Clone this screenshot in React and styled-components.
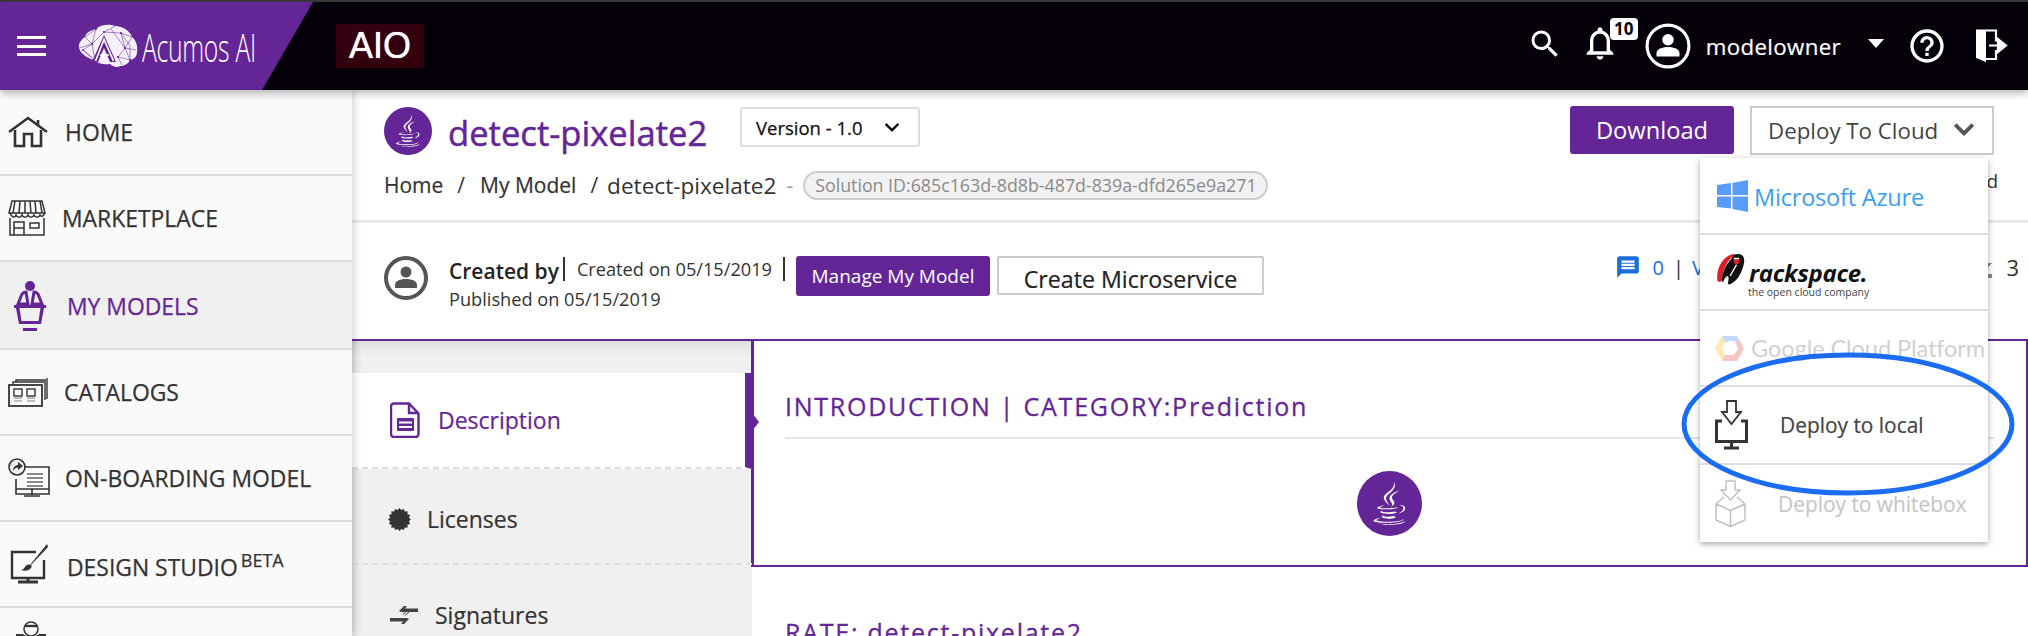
import React from 'react';
import styled, { createGlobalStyle } from 'styled-components';
import { FaJava } from 'react-icons/fa';
import { MdSearch, MdNotificationsNone, MdHelpOutline, MdMessage } from 'react-icons/md';

const purple = '#642697';

const Global = createGlobalStyle`
  html, body { margin: 0; padding: 0; background: #fff; }
  body { font-family: "Open Sans", sans-serif; color: #333; overflow: hidden; }
  * { box-sizing: border-box; }
`;

const Page = styled.div`
  position: relative; width: 2028px; height: 636px; overflow: hidden; display: flex; flex-direction: column;
`;
const TopStrip = styled.div`height: 2px; background: #3a3a3a; flex: none;`;
const Header = styled.header`
  flex: none; height: 88px; background: #05000a; display: flex; align-items: center; position: relative; z-index: 3;
  box-shadow: 0 3px 8px rgba(0,0,0,.3);
`;
const Brand = styled.div`
  width: 313px; height: 100%; background: ${purple}; clip-path: polygon(0 0, 100% 0, 262px 100%, 0 100%);
  display: flex; align-items: center; padding-left: 17px; flex: none;
`;
const Burger = styled.div`
  width: 29px; height: 20px; flex: none; margin-right: 32px;
  border-top: 3px solid #fff; border-bottom: 3px solid #fff; position: relative;
  &::after { content: ""; position: absolute; left: 0; right: 0; top: 5.5px; height: 3px; background: #fff; }
`;
const LogoText = styled.span`
  color: #fff; font-size: 39px; font-weight: 300; margin-left: 4px; display: inline-block; white-space: nowrap;
  transform: scaleX(.635); transform-origin: left center; width: 112px; letter-spacing: -.5px;
`;
const AioBox = styled.div`
  margin-left: 23px; width: 88px; height: 44px; background: #33000f; color: #fff; font-family: "Liberation Sans", sans-serif;
  font-size: 36px; line-height: 43px; text-align: center; text-shadow: 0 0 1px #fff;
`;
const HeaderRight = styled.div`margin-left: auto; display: flex; align-items: center; height: 100%; color: #fff; padding-right: 20px;`;
const Bell = styled.div`position: relative; margin-left: 20px; width: 36px; height: 36px; margin-top: -4px;`;
const Badge = styled.span`
  position: absolute; left: 27px; top: -8px; width: 28px; height: 22px; background: #fff; color: #05000a; border-radius: 4px;
  font-size: 17px; font-weight: 700; text-align: center; line-height: 22px;
`;
const UserName = styled.span`font-size: 22.3px; margin-left: 15px; letter-spacing: .35px; -webkit-text-stroke: .2px #fff;`;
const Caret = styled.span`
  width: 0; height: 0; border-left: 8px solid transparent; border-right: 8px solid transparent; border-top: 9px solid #fff;
  margin: 0 23px 6px 27px;
`;

const Body = styled.div`flex: 1; display: flex; min-height: 0;`;
const Sidebar = styled.nav`
  width: 352px; flex: none; background: #fafafa; position: relative; z-index: 2; box-shadow: 2px 0 8px rgba(0,0,0,.18);
`;
const NavRow = styled.div`
  height: ${p => p.$h || 86}px; display: flex; align-items: center; padding-left: 8px; border-bottom: 2px solid #dcdcdc;
  background: ${p => (p.$active ? '#f0f0f0' : '#fafafa')}; color: ${p => (p.$active ? purple : '#333')};
  font-size: 22.9px; white-space: nowrap; -webkit-text-stroke: .25px currentColor;
`;
const NavIcon = styled.span`
  width: ${p => p.$w}px; flex: none; display: flex; align-items: center; justify-content: flex-start; margin-top: ${p => p.$top || 0}px;
`;
const NavLabel = styled.span`margin-top: ${p => p.$top || 0}px;`;
const Sup = styled.sup`font-size: 18px; line-height: 0; vertical-align: 9px; margin-left: 3px;`;
const LastRow = styled(NavRow)`align-items: flex-start; padding: 13px 0 0 15px;`;

const Main = styled.main`flex: 1; min-width: 0; display: flex; flex-direction: column;`;
const TitleSection = styled.section`
  flex: none; height: 133px; border-bottom: 3px solid #e8e8e8; padding: 17px 34px 0 32px; display: flex; flex-direction: column;
`;
const TitleRow = styled.div`display: flex; align-items: flex-start;`;
const JavaCircle = styled.span`
  width: ${p => p.$size}px; height: ${p => p.$size}px; border-radius: 50%; background: ${purple}; color: #fff; flex: none;
  display: flex; align-items: center; justify-content: center; font-size: ${p => p.$size * .66}px;
`;
const Title = styled.h1`
  margin: 3px 0 0 16px; width: 275px; color: ${purple}; font-size: 34.6px; line-height: 46px; font-weight: 400; white-space: nowrap;
  -webkit-text-stroke: .5px ${purple};
`;
const VersionSelect = styled.div`
  margin-left: 17px; width: 180px; height: 40px; border: 2px solid #ddd; border-radius: 3px; display: flex; align-items: center;
  padding-left: 14px; font-size: 18.5px; color: #111; gap: 21px; -webkit-text-stroke: .25px #111;
`;
const PrimaryButton = styled.button`
  border: 0; border-radius: 3px; background: ${purple}; color: #fff; font-family: inherit; padding: 0; white-space: nowrap;
  width: ${p => p.$w}px; height: ${p => p.$h}px; font-size: ${p => p.$fs}px; font-weight: 400; flex: none;
`;
const TitleActions = styled.div`margin-left: auto; display: flex; gap: 16px; margin-top: -1px;`;
const DeploySelect = styled.div`
  width: 244px; height: 49px; border: 2px solid #ccc; display: flex; align-items: center; padding-left: 16px; color: #444; font-size: 22.3px;
  justify-content: space-between; padding-right: 17px;
`;
const ChevronUp = styled.span`display: flex; margin-top: -4px;`;
const Crumbs = styled.div`display: flex; align-items: center; font-size: 21px; margin-top: 13px; height: 32px; color: #333; white-space: nowrap;`;
const CrumbLink = styled.span`-webkit-text-stroke: .2px #333;`;
const CrumbSep = styled.span`margin: 0 ${p => p.$r || 15}px 0 ${p => p.$l || 14}px;`;
const CrumbLast = styled.span`font-size: 22.6px;`;
const CrumbDash = styled(CrumbSep)`color: #999;`;
const Pill = styled.span`
  margin-left: 9px; height: 29px; width: 465px; border: 2px solid #ccc; border-radius: 15px; background: #f2f2f2; color: #8a8a8a; font-size: 17.8px;
  line-height: 25px; padding-left: 10px; overflow: hidden; flex: none;
`;
const EndText = styled.span`margin-left: auto; font-size: 19px; margin-right: -4px; margin-top: -8px;`;

const CreatedRow = styled.section`flex: none; height: 116px; padding: 33px 0 0 32px; display: flex; align-items: flex-start;`;
const CreatedText = styled.div`margin-left: 21px; width: 347px; font-size: 18.2px; line-height: 27px; color: #333; flex: none; margin-top: 1px;`;
const CreatedBy = styled.b`font-weight: 600; color: #222; font-size: 21px;`;
const CreatedOn = styled.span`position: relative; top: -3px;`;
const Bar = styled.span`display: inline-block; width: 2px; height: 24px; background: #333; vertical-align: -2px; margin: 0 ${p => p.$r || 10}px 0 ${p => p.$l || 0}px;`;
const GhostButton = styled.button`
  margin-left: 7px; width: 267px; height: 39px; background: #fff; border: 2px solid #ccc; border-radius: 2px; font-family: inherit;
  font-size: 23.2px; color: #222; padding: 5px 0 0; white-space: nowrap; flex: none; -webkit-text-stroke: .2px #222;
`;
const Stats = styled.div`margin-left: auto; display: flex; align-items: center; font-size: 20px; color: #333; height: 40px; margin-top: -9px; padding-right: 9px;`;
const BlueNum = styled.span`color: #1a6fd8; margin: 0 9px 0 12px;`;
const BlueText = styled.span`color: #1a6fd8; margin-left: 8px; width: 56px;`;
const StatsFill = styled.span`width: 271px; display: flex; align-items: center; justify-content: flex-end; gap: 14px; font-size: 22px;`;

const Detail = styled.section`flex: 1; min-height: 0; display: grid; grid-template-columns: 400px 1fr; border-top: 2px solid ${purple};`;
const Tabs = styled.div`
  background: #f0f0f0; padding-top: 32px; box-shadow: inset 0 14px 14px -10px rgba(0,0,0,.1), inset 8px 0 8px -6px rgba(0,0,0,.08);
`;
const Tab = styled.div`
  height: ${p => p.$h}px; display: flex; align-items: center; padding: ${p => p.$pt || 0}px 0 0 ${p => p.$pl || 38}px; font-size: 23px; position: relative;
  border-bottom: 2px dashed #ddd; background: ${p => (p.$active ? '#fff' : 'transparent')}; color: ${p => (p.$active ? purple : '#333')};
  gap: ${p => p.$gap || 18}px; -webkit-text-stroke: .2px currentColor;
  ${p => p.$active && `
    border-right: 7px solid ${purple};
    &::after { content: ""; position: absolute; right: -14px; top: 40px; border-left: 7px solid ${purple}; border-top: 9px solid transparent; border-bottom: 9px solid transparent; }
  `}
`;
const Right = styled.div`display: flex; flex-direction: column; min-width: 0;`;
const Panel = styled.div`
  height: 226px; border-left: 2px solid ${purple}; border-right: 2px solid ${purple}; border-bottom: 2px solid ${purple}; padding: 49px 32px 0 31px;
  box-shadow: -1px 0 0 ${purple};
`;
const SectionTitle = styled.h2`
  margin: 0; font-size: 25px; font-weight: 400; color: ${purple}; letter-spacing: 1.75px; white-space: nowrap; line-height: 32px;
  -webkit-text-stroke: .3px ${purple};
`;
const SectionRule = styled.div`height: 2px; background: #e4e4e4; margin-top: 15px;`;
const CenterRow = styled.div`display: flex; justify-content: center; padding-top: 32px;`;
const RateBlock = styled.div`padding: 49px 0 0 33px;`;

const Dropdown = styled.div`
  position: absolute; left: 1700px; top: 158px; width: 288px; height: 384px; background: #fff; z-index: 4;
  box-shadow: 0 2px 6px rgba(0,0,0,.35); display: flex; flex-direction: column;
`;
const DropItem = styled.div`
  height: ${p => p.$h}px; flex: none; display: flex; align-items: center; padding-left: ${p => p.$pl || 15}px; border-bottom: ${p => (p.$last ? 0 : 2)}px solid ${p => p.$line || '#ddd'};
  ${p => p.$dim && 'opacity: .3;'} position: relative;
`;
const AzureText = styled.span`color: #3a9ff0; font-size: 23.5px; margin-left: 6px; white-space: nowrap; letter-spacing: -.2px; margin-top: 2px;`;
const RackWrap = styled.div`display: flex; flex-direction: column; margin-left: 3px; line-height: 1; margin-top: 14px;`;
const RackName = styled.span`font-style: italic; font-weight: 700; font-size: 24px; color: #111; letter-spacing: -.3px;`;
const RackSub = styled.span`font-size: 10.5px; color: #444; margin-left: -1px; margin-top: 2px; white-space: nowrap;`;
const GoogleText = styled.span`color: #666; margin-left: 7px; white-space: nowrap; letter-spacing: -.1px; font-family: "Lato", sans-serif; font-size: 23.6px;`;
const LocalText = styled.span`font-size: 20.9px; color: #444; margin-left: 32px; white-space: nowrap; -webkit-text-stroke: .2px #444;`;
const Ellipse = styled.svg`position: absolute; left: 1680px; top: 350px; z-index: 5; pointer-events: none;`;
const Spacer = styled.span`width: ${p => p.$w}px; flex: none;`;
const Shifted = styled.span`display: flex; margin-left: ${p => p.$l || 0}px;`;

const Avatar = ({ size, color, sw = 3 }) => (
  <svg width={size} height={size} viewBox="0 0 44 44" style={{ flex: 'none' }}>
    <circle cx="22" cy="22" r="20" fill="none" stroke={color} strokeWidth={sw} />
    <circle cx="22" cy="16" r="5.5" fill={color} />
    <path d="M11 32v-3c0-4 5-6 11-6s11 2 11 6v3z" fill={color} />
  </svg>
);

const BrainLogo = () => (
  <svg width="60" height="44" viewBox="0 0 60 44" style={{ flex: 'none' }}>
    <path d="M1 24C0 19 4 15 7 13 8 8 14 6 18 5 23 0 32 0 37 2 45 2 52 7 54 13 58 16 60 22 59 28 59 32 57 35 52 36 50 40 46 42 42 42 40 44 35 43 32 40 27 41 20 40 17 36 11 35 3 31 1 24Z" fill="#f6f0fa" />
    <g fill="none" stroke={purple} strokeWidth=".55">
      <path d="M7 13 14 20 5 26 13 33M18 5 14 20 26 8 37 2M26 8 43 9 54 13 47 24 58 26M43 9 47 24 52 36M47 24 40 33 44 41M14 20 17 36M7 13 18 5M1 24 14 20M33 5 47 24M43 9 52 22 52 36M40 33 52 36M5 26 17 36" />
    </g>
    <g fill={purple}><circle cx="14" cy="20" r="1.1"/><circle cx="26" cy="8" r="1.1"/><circle cx="47" cy="24" r="1.1"/><circle cx="43" cy="9" r="1.1"/><circle cx="40" cy="33" r="1.1"/><circle cx="5" cy="26" r="1"/><circle cx="52" cy="36" r="1"/><circle cx="18" cy="5" r="1"/></g>
    <path d="M14 38 26 11 38 38H32L26 24 20 38Z" fill={purple} />
    <path d="M17.500 37 26 15.500 35.500 37M22 31H31" fill="none" stroke="#fff" strokeWidth="1.7" />
  </svg>
);

const Exit = () => (
  <svg width="33" height="34" viewBox="0 0 33 34">
    <path d="M1 2h10v31L1 29z" fill="#fff" />
    <path d="M1 1.500h20v11M21 21v9h-10" fill="none" stroke="#fff" strokeWidth="2.2" />
    <path d="M14 16.500h13M23 10l8 6.500-8 6.500z" fill="#fff" stroke="#fff" strokeWidth="2.2" />
  </svg>
);

const ic = { fill: 'none', stroke: '#333', strokeWidth: 1.8 };
const HomeIcon = () => (
  <svg width="40" height="32" viewBox="0 0 40 32"><g {...ic} strokeWidth="2.6">
    <path d="M1 16 20 2l19 14" /><path d="M7 14v16h9V18h8v12h9V14" /><path d="M30 4v6" /></g></svg>
);
const StoreIcon = () => (
  <svg width="38" height="36" viewBox="0 0 38 36"><g {...ic} strokeWidth="1.5">
    <path d="M4 1h30l3 12H1zM2 13c2 5 5 5 6 2 1 3 5 3 6 0 1 3 5 3 6 0 1 3 5 3 6 0 1 3 5 3 6 0 2 3 4 0 5-2M7 1 5 13M12 1l-1 12M17 1v12M22 1l1 12M27 1l1 12M32 1l2 12" />
    <path d="M2 18v17h34V18M6 35V22h10v13M6 28h10M22 23h9v5h-9z" /></g></svg>
);
const PodiumIcon = () => (
  <svg width="32" height="50" viewBox="0 0 32 50" fill={purple}>
    <circle cx="16" cy="5" r="5" />
    <path d="M4 23 8 13c1-1 3-2 4-2l2 12zM28 23l-4-10c-1-1-3-2-4-2l-2 12z" fill="none" stroke={purple} strokeWidth="3" />
    <path d="M0 24h32v3h-2l-3 16H5L2 27H0zM5.500 27l2 13h17l2-13z" fillRule="evenodd" />
    <rect x="9" y="47" width="14" height="3" />
  </svg>
);
const CatalogIcon = () => (
  <svg width="40" height="30" viewBox="0 0 40 30"><g {...ic} strokeWidth="1.4">
    <path d="M8 5V3h29v20M5 8V5h31" /><path d="M39 1v21" />
    <rect x="1" y="8" width="33" height="21" strokeWidth="1.8" />
    <rect x="6" y="12" width="8" height="7" /><rect x="19" y="12" width="8" height="7" />
    <path d="M6 21h8M6 24h8M19 21h8M19 24h8" stroke="#aaa" strokeWidth="1.6" /></g></svg>
);
const OnboardIcon = () => (
  <svg width="42" height="40" viewBox="0 0 42 40"><g {...ic} strokeWidth="1.6">
    <path d="M17 9h24v27H8V21" /><path d="M8 31h33M24 31v6M16 38h16" />
    <path d="M19 16h16M19 20h16M19 24h16M19 28h16" stroke="#666" />
    <circle cx="9" cy="9" r="8" fill="#eee" /></g>
    <path d="M5 13c0-4 3-6 5-6V4l5 4-5 4V9.500c-2 0-4 1.500-5 3.500z" fill="#333" /></svg>
);
const StudioIcon = () => (
  <svg width="38" height="40" viewBox="0 0 38 40"><g {...ic} strokeWidth="2.4">
    <path d="M26 8H2v26h32V16" /><path d="M18 34v4M8 38h20" strokeWidth="3" /></g>
    <path d="M37 0 20 21c-2-1-4 0-5 2-1 2-3 3-4 3 3 1 7 1 9-1 2-2 2-3 1-4L38 3z" fill="#333" /></svg>
);
const GovernIcon = () => (
  <svg width="32" height="26" viewBox="0 0 32 26"><g {...ic} strokeWidth="1.5">
    <circle cx="16" cy="8" r="7" fill="#fafafa" /><path d="M10 5h12" strokeWidth="2.4" /></g>
    <path d="M1 13h7c2 3 14 3 16 0h7v13H1z" fill="#333" /></svg>
);
const DocIcon = () => (
  <svg width="30" height="36" viewBox="0 0 30 36"><g fill="none" stroke={purple} strokeWidth="2.4">
    <path d="M4 1.500h15l9.500 10V32a3 3 0 0 1-3 3H4a3 3 0 0 1-3-3V4.500a3 3 0 0 1 3-3z" /><path d="M19 2v9h9" /></g>
    <rect x="7" y="16" width="17" height="13" rx="1" fill={purple} /><path d="M9 20.500h13M9 25h13" stroke="#fff" strokeWidth="1.8" /></svg>
);
const burst = (() => {
  const pts = []; const n = 16;
  for (let i = 0; i < n * 2; i++) {
    const r = i % 2 ? 9.6 : 11.5; const a = (Math.PI * i) / n;
    pts.push(`${(11.5 + r * Math.cos(a)).toFixed(2)},${(11.5 + r * Math.sin(a)).toFixed(2)}`);
  }
  return pts.join(' ');
})();
const BurstIcon = () => <svg width="23" height="23" viewBox="0 0 23 23" style={{ flex: 'none' }}><polygon points={burst} fill="#333" /></svg>;
const SwapIcon = () => (
  <svg width="28" height="18" viewBox="0 0 28 18" style={{ flex: 'none' }} fill="#444">
    <path d="M11 6h17V2.500H15L17 0h-3L9 5zM17 12H0v3.500h13L11 18h3l5-5z" />
    <path d="M13 8.500 17 5M15 9.500 19 6" stroke="#444" strokeWidth="1" />
  </svg>
);
const Chevron = ({ w, h, sw, color }) => (
  <svg width={w} height={h} viewBox="0 0 20 12"><path d="M2 2l8 8 8-8" fill="none" stroke={color} strokeWidth={sw} /></svg>
);
const TrayArrow = () => (
  <svg width="14" height="22" viewBox="0 0 14 22" fill="#888" style={{ flex: 'none' }}>
    <path d="M4 0h6v7h4l-7 8-7-8h4zM0 18h14v4H0z" />
  </svg>
);
const Windows = () => (
  <svg width="31" height="32" viewBox="0 0 31 32" style={{ flex: 'none' }} fill="#5a9cf6">
    <path d="M0 5 14 3v12H0zM15.500 3 31 0v15H15.500zM0 16.500h14v12L0 27zM15.500 16.500H31V32l-15.500-3z" />
  </svg>
);
const RackMark = () => (
  <svg width="30" height="33" viewBox="0 0 32 36" style={{ flex: 'none', marginTop: -5 }}>
    <path d="M18 1C8 4 0 14 1 30c1 2 4 2 5 0 1-13 6-22 14-28z" fill="#d8202a" />
    <path d="M19 2c8-3 13 1 11 10-2 9-7 19-15 22-2 1-3-1-2-3 1-5 0-9-4-3-1 3-2 4-3 3 0-8 3-14 5-18 4-4 6-8 8-11z" fill="#111" />
    <path d="M19 6h6v5l-3 2-3-2z" fill="#d8202a" />
    <path d="M19 6h6M22 13l-7 12" stroke="#fff" strokeWidth="1.400" fill="none" />
  </svg>
);
const GoogleHex = () => (
  <svg width="29" height="27" viewBox="0 0 29 27" style={{ flex: 'none' }}>
    <path d="M7 1h15l3 5H15L9 8z" fill="#4285f4" /><path d="M0 13.500 7 1l3 7-3 6 3 5-3 7z" fill="#fbbc05" />
    <path d="M29 13.500 22 26H7l3-6h9l4-6-3-8h5z" fill="#ea4335" />
  </svg>
);
const LocalIcon = () => (
  <svg width="33" height="50" viewBox="0 0 33 50" style={{ flex: 'none' }} fill="none" stroke="#333">
    <path d="M12 1h9v11h5L16.500 24 7 12h5z" strokeWidth="1.8" />
    <path d="M7 21H1.500v20.500h30V21H26" strokeWidth="3" />
    <path d="M16.500 42v5M9 48h15" strokeWidth="3" />
  </svg>
);
const BoxIcon = () => (
  <svg width="31" height="47" viewBox="0 0 31 47" style={{ flex: 'none' }} fill="none" stroke="#333" strokeWidth="1.5">
    <path d="M11 1h9v9h5l-9.500 10L6 10h5z" />
    <path d="M9 17 1 24v16l14.500 6.500L30 40V24l-8-7M1 24l14.500 6.500L30 24M15.500 30.500v16" />
  </svg>
);

export default function App() {
  return (
    <Page>
      <Global />
      <TopStrip />
      <Header>
        <Brand>
          <Burger />
          <BrainLogo />
          <LogoText>Acumos AI</LogoText>
        </Brand>
        <AioBox>AIO</AioBox>
        <HeaderRight>
          <MdSearch size={36} style={{ marginTop: -4 }} />
          <Bell>
            <MdNotificationsNone size={40} style={{ margin: '-3px 0 0 -3px' }} />
            <Badge>10</Badge>
          </Bell>
          <Spacer $w={26} />
          <Avatar size={46} color="#fff" />
          <UserName>modelowner</UserName>
          <Caret />
          <MdHelpOutline size={40} />
          <Spacer $w={28} />
          <Exit />
        </HeaderRight>
      </Header>
      <Body>
        <Sidebar>
          <NavRow><NavIcon $w={57}><HomeIcon /></NavIcon><NavLabel $top={1}>HOME</NavLabel></NavRow>
          <NavRow><NavIcon $w={54}><StoreIcon /></NavIcon><NavLabel>MARKETPLACE</NavLabel></NavRow>
          <NavRow $active $h={88}><NavIcon $w={59} $top={2}><Shifted $l={6}><PodiumIcon /></Shifted></NavIcon><NavLabel $top={2}>MY MODELS</NavLabel></NavRow>
          <NavRow><NavIcon $w={56}><CatalogIcon /></NavIcon><NavLabel>CATALOGS</NavLabel></NavRow>
          <NavRow><NavIcon $w={57}><OnboardIcon /></NavIcon><NavLabel>ON-BOARDING MODEL</NavLabel></NavRow>
          <NavRow><NavIcon $w={59}><Shifted $l={2}><StudioIcon /></Shifted></NavIcon><NavLabel $top={6}>DESIGN STUDIO<Sup>BETA</Sup></NavLabel></NavRow>
          <LastRow><GovernIcon /></LastRow>
        </Sidebar>
        <Main>
          <TitleSection>
            <TitleRow>
              <JavaCircle $size={48}><FaJava /></JavaCircle>
              <Title>detect-pixelate2</Title>
              <VersionSelect>Version - 1.0 <Chevron w={16} h={10} sw={3} color="#111" /></VersionSelect>
              <TitleActions>
                <PrimaryButton $w={164} $h={48} $fs={23.7}>Download</PrimaryButton>
                <DeploySelect>Deploy To Cloud <ChevronUp><Chevron w={22} h={14} sw={3.4} color="#555" /></ChevronUp></DeploySelect>
              </TitleActions>
            </TitleRow>
            <Crumbs>
              <CrumbLink>Home</CrumbLink><CrumbSep>/</CrumbSep>
              <CrumbLink>My Model</CrumbLink><CrumbSep $r={9}>/</CrumbSep>
              <CrumbLast>detect-pixelate2</CrumbLast>
              <CrumbDash $l={10} $r={1}>-</CrumbDash>
              <Pill>Solution ID:685c163d-8d8b-487d-839a-dfd265e9a271</Pill>
              <EndText>d</EndText>
            </Crumbs>
          </TitleSection>
          <CreatedRow>
            <Avatar size={44} color="#555" sw={4} />
            <CreatedText>
              <CreatedBy>Created by</CreatedBy><Bar $l={4} $r={12} /><CreatedOn>Created on 05/15/2019</CreatedOn> <Bar $l={6} /><br />
              Published on 05/15/2019
            </CreatedText>
            <PrimaryButton $w={194} $h={40} $fs={19}>Manage My Model</PrimaryButton>
            <GhostButton>Create Microservice</GhostButton>
            <Stats>
              <MdMessage size={26} color="#1a6fd8" />
              <BlueNum>0</BlueNum>|
              <BlueText>V</BlueText>
              <StatsFill><TrayArrow />3</StatsFill>
            </Stats>
          </CreatedRow>
          <Detail>
            <Tabs>
              <Tab $active $h={96}><DocIcon />Description</Tab>
              <Tab $h={96} $gap={16} $pl={36} $pt={6}><BurstIcon />Licenses</Tab>
              <Tab $h={96} $gap={17} $pt={6}><SwapIcon />Signatures</Tab>
            </Tabs>
            <Right>
              <Panel>
                <SectionTitle>INTRODUCTION | CATEGORY:Prediction</SectionTitle>
                <SectionRule />
                <CenterRow><JavaCircle $size={65}><FaJava /></JavaCircle></CenterRow>
              </Panel>
              <RateBlock><SectionTitle>RATE: detect-pixelate2</SectionTitle></RateBlock>
            </Right>
          </Detail>
        </Main>
      </Body>
      <Dropdown>
        <DropItem $h={77} $pl={17}><Windows /><AzureText>Microsoft Azure</AzureText></DropItem>
        <DropItem $h={76} $pl={16}><RackMark /><RackWrap><RackName>rackspace.</RackName><RackSub>the open cloud company</RackSub></RackWrap></DropItem>
        <DropItem $h={76} $dim $line="#999"><GoogleHex /><GoogleText>Google Cloud Platform</GoogleText></DropItem>
        <DropItem $h={78}><LocalIcon /><LocalText>Deploy to local</LocalText></DropItem>
        <DropItem $h={77} $last $dim><BoxIcon /><LocalText>Deploy to whitebox</LocalText></DropItem>
      </Dropdown>
      <Ellipse width="336" height="148" viewBox="0 0 336 148">
        <ellipse cx="168" cy="74" rx="164" ry="69" fill="none" stroke="#1a6cf0" strokeWidth="5" />
      </Ellipse>
    </Page>
  );
}
